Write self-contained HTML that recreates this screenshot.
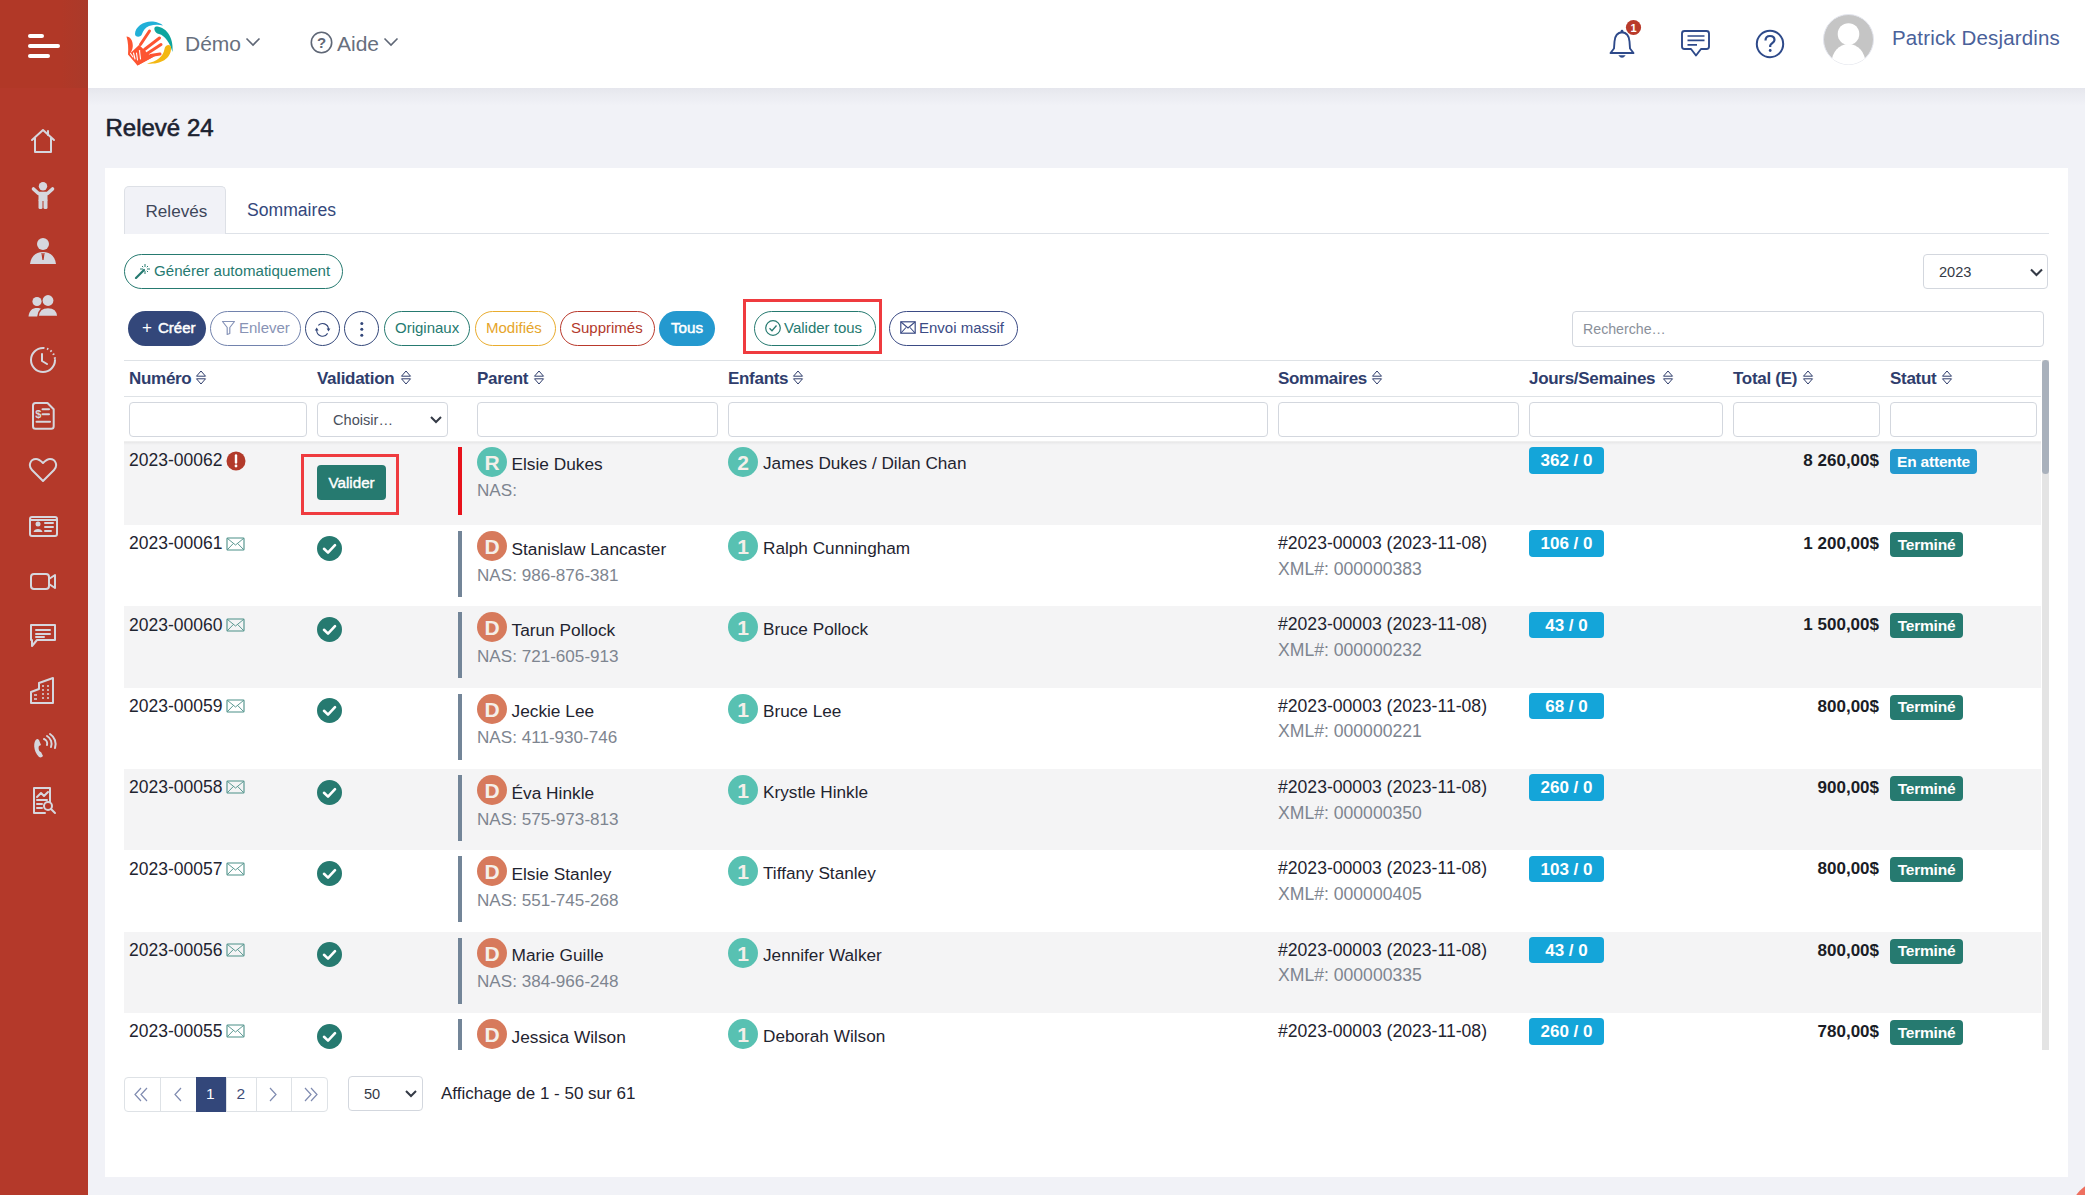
<!DOCTYPE html><html><head><meta charset="utf-8"><style>
html,body{margin:0;padding:0;width:2085px;height:1195px;overflow:hidden;background:#f1f2f7;font-family:"Liberation Sans", sans-serif;}
.t{position:absolute;white-space:nowrap;line-height:1;}
.b{position:absolute;box-sizing:border-box;}
</style></head><body>
<div class="b" style="left:88px;top:88px;width:1997px;height:18px;background:linear-gradient(rgba(30,30,60,0.055),rgba(30,30,60,0.035) 30%,rgba(30,30,60,0))"></div>
<div class="b" style="left:88px;top:0px;width:1997px;height:88px;background:#fff;z-index:2"></div>
<div style="position:absolute;left:0;top:0;width:2085px;height:1195px;z-index:3;pointer-events:none">
<div class="b" style="left:0px;top:0px;width:88px;height:1195px;background:#b4392a"></div>
<div class="b" style="left:0px;top:0px;width:88px;height:88px;background:linear-gradient(to right,#b13827 70%,#aa3a2a)"></div>
<div class="b" style="left:28px;top:34px;width:16px;height:4px;background:#fff;border-radius:2px"></div>
<div class="b" style="left:28px;top:44px;width:32px;height:4px;background:#fff;border-radius:2px"></div>
<div class="b" style="left:28px;top:54px;width:22px;height:4px;background:#fff;border-radius:2px"></div>
<svg class="b" style="left:120px;top:15px" width="60" height="55" viewBox="0 0 60 55">
<path d="M15 19 C15 11 25 5.5 33 6.5 C37 7 41 8.5 43 10.5 C39 9.5 34 9.5 29 11 C25 12.5 23 16 22 19 C21 22.5 15 22.5 15 19 Z" fill="#22b0d8"/>
<path d="M36 11.5 C45 11.5 54 21 52.5 37 C50 28 45 20.5 39 19 C34 18 33 12 36 11.5 Z" fill="#0fa59e"/>
<path d="M51 32 C52 43 41 50 27 48.5 C37 46.5 43.5 41 44.5 34 C45 29.5 50.5 28.5 51 32 Z" fill="#f3b712"/>
<g stroke="#fd5532" stroke-width="3" stroke-linecap="round"><path d="M20.5 29.5 L29.5 16"/><path d="M24.5 34.5 L39.5 23"/><path d="M28 38 L41 29.5"/><path d="M30.5 40.5 L40 39"/></g>
<path d="M6.5 21.5 C10.5 21.5 13 26 12.8 31 C12.7 34 11.5 36.5 10 38.5 L19 30 L31 41.5 L36 40.5 L17.5 50.5 L8 39.5 C8.5 33 8.2 27 6.5 21.5 Z" fill="#fd5532"/>
<path d="M19 30 L26 37.5 L31 41.5 L34 41.5 L17.5 50.5 L16 48 Z" fill="#fd5532"/>
<g stroke="#fff" stroke-width="1.1" stroke-linecap="round"><path d="M10.5 38.5 L13 42"/><path d="M13.5 38 L15 44"/><path d="M16.5 38 L17.5 45"/><path d="M19.5 35.5 L20.5 44"/></g>
</svg>
<div class="t" style="left:185px;top:32.9px;font-size:21px;color:#676f7e;font-weight:normal;">Démo</div>
<svg class="b" style="left:245px;top:37px" width="16" height="10" viewBox="0 0 16 10"><path d="M1.5 1.5 L8 8 L14.5 1.5" stroke="#5f6776" stroke-width="1.6" fill="none"/></svg>
<svg class="b" style="left:310px;top:31px" width="23" height="23" viewBox="0 0 23 23"><circle cx="11.5" cy="11.5" r="10.2" stroke="#5f6776" stroke-width="1.6" fill="none"/><text x="11.5" y="17" font-size="15" text-anchor="middle" fill="#5f6776" font-weight="bold" font-family="Liberation Sans">?</text></svg>
<div class="t" style="left:337px;top:32.9px;font-size:21px;color:#676f7e;font-weight:normal;">Aide</div>
<svg class="b" style="left:383px;top:37px" width="16" height="10" viewBox="0 0 16 10"><path d="M1.5 1.5 L8 8 L14.5 1.5" stroke="#5f6776" stroke-width="1.6" fill="none"/></svg>
<svg class="b" style="left:1606px;top:22px" width="34" height="40" viewBox="0 0 34 40"><path d="M4.5 31 L8 26.5 L8.5 19.5 C9 13.5 12 10.5 16 10.3 C20 10.5 23 13.5 23.5 19.5 L24 26.5 L27.5 31 Z" stroke="#2e4a8a" stroke-width="1.9" fill="none" stroke-linejoin="round"/>
<path d="M12.3 33.3 Q16 38.3 19.7 33.3 Z" fill="#2e4a8a"/><circle cx="16" cy="9.2" r="1.4" fill="#2e4a8a"/></svg>
<svg class="b" style="left:1625px;top:19px" width="17" height="17" viewBox="0 0 17 17"><circle cx="8.5" cy="8.5" r="7.6" fill="#b93a2a"/><text x="8.5" y="12.6" font-size="11" text-anchor="middle" fill="#fff" font-weight="bold" font-family="Liberation Sans">1</text></svg>
<svg class="b" style="left:1680px;top:28px" width="32" height="32" viewBox="0 0 32 32"><path d="M4.5 3 H26.5 Q29 3 29 5.5 V18.5 Q29 21 26.5 21 H21 L16 27.5 L11 21 H4.5 Q2 21 2 18.5 V5.5 Q2 3 4.5 3 Z" stroke="#2e4a8a" stroke-width="1.9" fill="none" stroke-linejoin="round"/>
<path d="M7.5 8 H24.5 M7.5 12.3 H24.5 M7.5 16.8 H17" stroke="#2e4a8a" stroke-width="1.7"/></svg>
<svg class="b" style="left:1754px;top:28px" width="32" height="32" viewBox="0 0 32 32"><circle cx="16" cy="16" r="13.2" stroke="#2e4a8a" stroke-width="2" fill="none"/><path d="M11.5 12.5 C11.5 9.5 13.5 8 16 8 C18.8 8 20.5 9.8 20.5 12 C20.5 14.8 17 15.2 16.2 17.5 L16.2 19" stroke="#2e4a8a" stroke-width="2.2" fill="none"/><circle cx="16.2" cy="22.5" r="1.4" fill="#2e4a8a"/></svg>
<svg class="b" style="left:1823px;top:14px" width="51" height="51" viewBox="0 0 51 51"><defs><clipPath id="av"><circle cx="25.5" cy="25.5" r="25"/></clipPath></defs>
<circle cx="25.5" cy="25.5" r="25" fill="#c5c5c5" stroke="#e4e6ee" stroke-width="1"/>
<g clip-path="url(#av)"><circle cx="25.5" cy="20" r="10.8" fill="#fff"/><ellipse cx="25.5" cy="49" rx="17" ry="19" fill="#fff"/></g></svg>
<div class="t" style="left:1892px;top:28.4px;font-size:20.5px;color:#4a619a;font-weight:normal;letter-spacing:0.15px">Patrick Desjardins</div>
<svg class="b" style="left:28px;top:126px" width="30" height="30" viewBox="0 0 30 30"><path d="M4 14 L15 4 L26 14 M7 12 V26 H23 V12" stroke="#d6d7de" stroke-width="2" fill="none" stroke-linejoin="round" stroke-linecap="round"/><path d="M20 5 V9" stroke="#d6d7de" stroke-width="2" fill="none" stroke-linejoin="round" stroke-linecap="round"/></svg>
<svg class="b" style="left:28px;top:181px" width="30" height="30" viewBox="0 0 30 30"><circle cx="15" cy="5.2" r="4.2" fill="#d6d7de"/><path d="M5.5 8 L10.5 12.5 H19.5 L24.5 8" stroke="#d6d7de" stroke-width="3.6" fill="none" stroke-linecap="round" stroke-linejoin="round"/><rect x="10.5" y="11" width="9" height="9" rx="1" fill="#d6d7de"/><rect x="10.5" y="18" width="4" height="10" rx="1.5" fill="#d6d7de"/><rect x="15.5" y="18" width="4" height="10" rx="1.5" fill="#d6d7de"/></svg>
<svg class="b" style="left:28px;top:236px" width="30" height="30" viewBox="0 0 30 30"><circle cx="15" cy="8" r="6" fill="#d6d7de"/><path d="M2 28 C3 20 8 16 15 16 C22 16 27 20 28 28 Z" fill="#d6d7de"/><path d="M14 17 L15 24 L16 17" stroke="#b4392a" stroke-width="1.2" fill="none"/></svg>
<svg class="b" style="left:28px;top:291px" width="30" height="30" viewBox="0 0 30 30"><circle cx="9" cy="10.5" r="4.6" fill="#d6d7de"/><circle cx="20" cy="9.5" r="5.4" fill="#d6d7de"/><path d="M0.5 25.5 C1 19.5 4.5 17 9 17 C13.5 17 17 19.5 17.5 25.5 Z" fill="#d6d7de"/><path d="M10 25.5 C10.5 19 14.5 16.5 20 16.5 C25.5 16.5 29.5 19 30 25.5 Z" fill="#d6d7de" stroke="#b4392a" stroke-width="1.6"/></svg>
<svg class="b" style="left:28px;top:345px" width="30" height="30" viewBox="0 0 30 30"><path d="M15 3 A12 12 0 1 0 27 15" stroke="#d6d7de" stroke-width="2" fill="none" stroke-linejoin="round" stroke-linecap="round"/><path d="M15 3 A12 12 0 0 1 27 15" stroke="#d6d7de" stroke-width="2" fill="none" stroke-dasharray="1.5 2.5"/><path d="M14 9 V16 L19 19" stroke="#d6d7de" stroke-width="2" fill="none" stroke-linejoin="round" stroke-linecap="round"/></svg>
<svg class="b" style="left:28px;top:400px" width="30" height="30" viewBox="0 0 30 30"><path d="M7.5 3 H19.5 L25.7 9.2 V26.2 Q25.7 28.7 23.2 28.7 H7.5 Q5 28.7 5 26.2 V5.5 Q5 3 7.5 3 Z" stroke="#d6d7de" stroke-width="2" fill="none" stroke-linejoin="round" stroke-linecap="round"/><path d="M14.5 9.3 H21 M14.5 14.3 H21 M8.5 21.8 H22" stroke="#d6d7de" stroke-width="2" fill="none" stroke-linejoin="round" stroke-linecap="round" stroke-width="1.6"/><text x="10.2" y="18" font-size="11" text-anchor="middle" fill="#d6d7de" font-weight="bold" font-family="Liberation Sans">$</text></svg>
<svg class="b" style="left:28px;top:455px" width="30" height="30" viewBox="0 0 30 30"><path d="M15 26 L4 15 C0 11 2 4 8 4 C11 4 13 6 15 8 C17 6 19 4 22 4 C28 4 30 11 26 15 Z" stroke="#d6d7de" stroke-width="2" fill="none" stroke-linejoin="round" stroke-linecap="round"/></svg>
<svg class="b" style="left:28px;top:511px" width="30" height="30" viewBox="0 0 30 30"><rect x="2" y="6" width="27" height="19" rx="2" stroke="#d6d7de" stroke-width="2" fill="none" stroke-linejoin="round" stroke-linecap="round"/><circle cx="10" cy="13" r="2.5" fill="#d6d7de"/><path d="M5.5 21 C6 17 14 17 14.5 21 Z" fill="#d6d7de"/><path d="M17 12 H25 M17 16 H25 M17 20 H23 M2 9 H29" stroke="#d6d7de" stroke-width="2" fill="none" stroke-linejoin="round" stroke-linecap="round" stroke-width="1.6"/></svg>
<svg class="b" style="left:28px;top:566px" width="30" height="30" viewBox="0 0 30 30"><rect x="3" y="8" width="18" height="15" rx="3" stroke="#d6d7de" stroke-width="2" fill="none" stroke-linejoin="round" stroke-linecap="round"/><path d="M21 13 L27 9 V22 L21 18" stroke="#d6d7de" stroke-width="2" fill="none" stroke-linejoin="round" stroke-linecap="round"/></svg>
<svg class="b" style="left:28px;top:620px" width="30" height="30" viewBox="0 0 30 30"><path d="M3 5 H27 V20 H9 L4 26 V20 H3 Z" stroke="#d6d7de" stroke-width="2" fill="none" stroke-linejoin="round" stroke-linecap="round"/><path d="M8 10 H22 M8 14 H22 M8 17 H16" stroke="#d6d7de" stroke-width="2" fill="none" stroke-linejoin="round" stroke-linecap="round" stroke-width="1.6"/></svg>
<svg class="b" style="left:28px;top:676px" width="30" height="30" viewBox="0 0 30 30"><path d="M3 27 V16 L11 13 V7 L25 2 V27 Z" stroke="#d6d7de" stroke-width="2" fill="none" stroke-linejoin="round" stroke-linecap="round"/><path d="M6 19 H9 M6 23 H9 M14 10 H16 M19 10 H21 M14 14 H16 M19 14 H21 M14 18 H16 M19 18 H21 M14 22 H16 M19 22 H21" stroke="#d6d7de" stroke-width="1.6"/></svg>
<svg class="b" style="left:28px;top:731px" width="30" height="30" viewBox="0 0 30 30"><path d="M9 8 C5 10 5 20 11 26 C13 27 14 26 15 25 L13 21 C11 21 10 17 11 15 L13 14 L11 9 C10 8 10 8 9 8 Z" fill="#d6d7de"/><path d="M16 8 A5 5 0 0 1 19 14 M19 5 A9 9 0 0 1 23 16 M22 3 A12 12 0 0 1 27 17" stroke="#d6d7de" stroke-width="2" fill="none" stroke-linejoin="round" stroke-linecap="round" stroke-width="1.8"/></svg>
<svg class="b" style="left:28px;top:786px" width="30" height="30" viewBox="0 0 30 30"><path d="M6 2 H22 V16 M6 2 V27 H17" stroke="#d6d7de" stroke-width="2" fill="none" stroke-linejoin="round" stroke-linecap="round"/><path d="M9 11 L13 7 L16 10 L20 6 M9 14 H19 M9 18 H14 M9 22 H14" stroke="#d6d7de" stroke-width="2" fill="none" stroke-linejoin="round" stroke-linecap="round" stroke-width="1.6"/><circle cx="20" cy="20" r="4" stroke="#d6d7de" stroke-width="2" fill="none" stroke-linejoin="round" stroke-linecap="round"/><path d="M23 23 L27 27" stroke="#d6d7de" stroke-width="2" fill="none" stroke-linejoin="round" stroke-linecap="round" stroke-width="2.2"/></svg>
</div>
<div class="t" style="left:105.5px;top:115.9px;font-size:24px;color:#1c2230;font-weight:normal;-webkit-text-stroke:0.6px #1c2230">Relevé 24</div>
<div class="b" style="left:105px;top:168px;width:1963px;height:1009px;background:#fff"></div>
<div class="b" style="left:124px;top:233px;width:1925px;height:1px;background:#dee2e8"></div>
<div class="b" style="left:124px;top:186px;width:102px;height:48px;background:#f1f2f7;border:1px solid #dde0e6;border-bottom:none;border-radius:5px 5px 0 0"></div>
<div class="t" style="left:145.5px;top:202.5px;font-size:17.1px;color:#3d4659;font-weight:normal;">Relevés</div>
<div class="t" style="left:247px;top:202.1px;font-size:17.6px;color:#34487c;font-weight:normal;">Sommaires</div>
<div class="b" style="left:124px;top:254px;width:219px;height:35px;border:1px solid #267a70;border-radius:18px;background:#fff"></div>
<svg class="b" style="left:134px;top:262px" width="17" height="17" viewBox="0 0 17 17"><path d="M2 16 L10 8" stroke="#267a70" stroke-width="2.2" stroke-linecap="round"/><path d="M11 2 V5 M11 9 V12 M6 7 H9 M13 7 H16 M8 4 L9.2 5.2 M14 4 L12.8 5.2 M14 10 L12.8 8.8" stroke="#267a70" stroke-width="1"/></svg>
<div class="t" style="left:154px;top:262.7px;font-size:15.1px;color:#267a70;font-weight:normal;">Générer automatiquement</div>
<div class="b" style="left:1923px;top:254px;width:125px;height:35px;border:1px solid #d3d7de;border-radius:4px;background:#fff"></div>
<div class="t" style="left:1939px;top:264.6px;font-size:14.6px;color:#343a46;font-weight:normal;">2023</div>
<svg class="b" style="left:2029px;top:267px" width="15" height="11" viewBox="0 0 15 11"><path d="M2 2.5 L7.5 8 L13 2.5" stroke="#343a46" stroke-width="2.1" fill="none"/></svg>
<div class="b" style="left:128px;top:311px;width:78px;height:35px;background:#33477a;border-radius:18px"></div>
<div class="t" style="left:142px;top:318.6px;font-size:17px;color:#fff;font-weight:normal;">+</div>
<div class="t" style="left:158px;top:320.1px;font-size:15px;color:#fff;font-weight:normal;-webkit-text-stroke:0.5px #fff">Créer</div>
<div class="b" style="left:210px;top:311px;width:91px;height:35px;border:1px solid #7283ad;border-radius:18px"></div>
<svg class="b" style="left:221px;top:320px" width="15" height="16" viewBox="0 0 15 16"><path d="M1.5 1.5 H13.5 L8.8 7.5 V13.5 L6.2 14.5 V7.5 Z" stroke="#8794b8" stroke-width="1.2" fill="none" stroke-linejoin="round"/></svg>
<div class="t" style="left:239px;top:320.1px;font-size:15px;color:#8893b5;font-weight:normal;">Enlever</div>
<div class="b" style="left:305px;top:311px;width:35px;height:35px;border:1px solid #33477a;border-radius:50%"></div>
<svg class="b" style="left:313px;top:320px" width="19" height="19" viewBox="0 0 19 19"><path d="M5.3 5.4 A5.9 5.9 0 0 1 15.5 9" stroke="#33477a" stroke-width="1.1" fill="none"/><path d="M13.6 8.6 L17.4 8.6 L15.5 11.4 Z" fill="#33477a"/><path d="M14.6 13.4 A5.9 5.9 0 0 1 3.7 10" stroke="#33477a" stroke-width="1.1" fill="none"/><path d="M1.8 10.4 L5.6 10.4 L3.7 7.6 Z" fill="#33477a"/></svg>
<div class="b" style="left:344px;top:311px;width:35px;height:35px;border:1px solid #33477a;border-radius:50%"></div>
<svg class="b" style="left:358px;top:318px" width="7" height="21" viewBox="0 0 7 21"><circle cx="3.8" cy="5.4" r="1.5" fill="#33477a"/><circle cx="3.8" cy="11.3" r="1.5" fill="#33477a"/><circle cx="3.8" cy="17.2" r="1.5" fill="#33477a"/></svg>
<div class="b" style="left:384px;top:311px;width:86px;height:35px;border:1px solid #267a70;border-radius:18px"></div>
<div class="t" style="left:395px;top:320.1px;font-size:15px;color:#267a70;font-weight:normal;">Originaux</div>
<div class="b" style="left:475px;top:311px;width:81px;height:35px;border:1px solid #e9ac2e;border-radius:18px"></div>
<div class="t" style="left:486px;top:320.1px;font-size:15px;color:#e6a52a;font-weight:normal;">Modifiés</div>
<div class="b" style="left:560px;top:311px;width:95px;height:35px;border:1px solid #b9392c;border-radius:18px"></div>
<div class="t" style="left:571px;top:320.1px;font-size:15px;color:#b3392b;font-weight:normal;">Supprimés</div>
<div class="b" style="left:659px;top:311px;width:56px;height:35px;background:#2499cf;border-radius:18px"></div>
<div class="t" style="left:671px;top:319.9px;font-size:15.2px;color:#fff;font-weight:normal;-webkit-text-stroke:0.5px #fff">Tous</div>
<div class="b" style="left:743px;top:299px;width:139px;height:55px;border:3px solid #ef3b3f"></div>
<div class="b" style="left:754px;top:311px;width:122px;height:35px;border:1px solid #267a70;border-radius:18px"></div>
<svg class="b" style="left:764px;top:319px" width="18" height="18" viewBox="0 0 18 18"><circle cx="9" cy="9" r="7.3" stroke="#267a70" stroke-width="1.2" fill="none"/><path d="M5.5 9.2 L8 11.7 L12.5 6.5" stroke="#267a70" stroke-width="1.3" fill="none"/></svg>
<div class="t" style="left:784px;top:320.1px;font-size:15px;color:#267a70;font-weight:normal;">Valider tous</div>
<div class="b" style="left:889px;top:311px;width:129px;height:35px;border:1px solid #3b4b85;border-radius:18px"></div>
<svg class="b" style="left:900px;top:321px" width="16" height="13" viewBox="0 0 16 13"><rect x="0.8" y="0.8" width="14.4" height="11.4" stroke="#3b4b85" stroke-width="1.2" fill="none"/><path d="M1 1 L8 7 L15 1 M1 12 L6 6.5 M15 12 L10 6.5" stroke="#3b4b85" stroke-width="1.1" fill="none"/></svg>
<div class="t" style="left:919px;top:320.1px;font-size:15px;color:#3b4b85;font-weight:normal;">Envoi massif</div>
<div class="b" style="left:1572px;top:311px;width:472px;height:36px;border:1px solid #d3d7de;border-radius:4px;background:#fff"></div>
<div class="t" style="left:1583px;top:322.0px;font-size:14.2px;color:#8a909a;font-weight:normal;">Recherche…</div>
<div class="b" style="left:124px;top:360px;width:1917px;height:1px;background:#dee2e6"></div>
<div class="t" style="left:129px;top:369.9px;font-size:17px;color:#2f3d6c;font-weight:bold;letter-spacing:-0.3px">Numéro</div>
<svg class="b" style="left:195.0px;top:369.5px" width="12" height="15" viewBox="0 0 12 15"><path d="M1.5 6.2 L6 1 L10.5 6.2 Z M1.5 8.8 L6 14 L10.5 8.8 Z" stroke="#2f3d6c" stroke-width="1" fill="none" stroke-linejoin="miter"/></svg>
<div class="t" style="left:317px;top:369.9px;font-size:17px;color:#2f3d6c;font-weight:bold;letter-spacing:-0.3px">Validation</div>
<svg class="b" style="left:399.5px;top:369.5px" width="12" height="15" viewBox="0 0 12 15"><path d="M1.5 6.2 L6 1 L10.5 6.2 Z M1.5 8.8 L6 14 L10.5 8.8 Z" stroke="#2f3d6c" stroke-width="1" fill="none" stroke-linejoin="miter"/></svg>
<div class="t" style="left:477px;top:369.9px;font-size:17px;color:#2f3d6c;font-weight:bold;letter-spacing:-0.3px">Parent</div>
<svg class="b" style="left:532.5px;top:369.5px" width="12" height="15" viewBox="0 0 12 15"><path d="M1.5 6.2 L6 1 L10.5 6.2 Z M1.5 8.8 L6 14 L10.5 8.8 Z" stroke="#2f3d6c" stroke-width="1" fill="none" stroke-linejoin="miter"/></svg>
<div class="t" style="left:728px;top:369.9px;font-size:17px;color:#2f3d6c;font-weight:bold;letter-spacing:-0.3px">Enfants</div>
<svg class="b" style="left:791.5px;top:369.5px" width="12" height="15" viewBox="0 0 12 15"><path d="M1.5 6.2 L6 1 L10.5 6.2 Z M1.5 8.8 L6 14 L10.5 8.8 Z" stroke="#2f3d6c" stroke-width="1" fill="none" stroke-linejoin="miter"/></svg>
<div class="t" style="left:1278px;top:369.9px;font-size:17px;color:#2f3d6c;font-weight:bold;letter-spacing:-0.3px">Sommaires</div>
<svg class="b" style="left:1370.5px;top:369.5px" width="12" height="15" viewBox="0 0 12 15"><path d="M1.5 6.2 L6 1 L10.5 6.2 Z M1.5 8.8 L6 14 L10.5 8.8 Z" stroke="#2f3d6c" stroke-width="1" fill="none" stroke-linejoin="miter"/></svg>
<div class="t" style="left:1529px;top:369.9px;font-size:17px;color:#2f3d6c;font-weight:bold;letter-spacing:-0.3px">Jours/Semaines</div>
<svg class="b" style="left:1661.5px;top:369.5px" width="12" height="15" viewBox="0 0 12 15"><path d="M1.5 6.2 L6 1 L10.5 6.2 Z M1.5 8.8 L6 14 L10.5 8.8 Z" stroke="#2f3d6c" stroke-width="1" fill="none" stroke-linejoin="miter"/></svg>
<div class="t" style="left:1733px;top:369.9px;font-size:17px;color:#2f3d6c;font-weight:bold;letter-spacing:-0.3px">Total (E)</div>
<svg class="b" style="left:1801.5px;top:369.5px" width="12" height="15" viewBox="0 0 12 15"><path d="M1.5 6.2 L6 1 L10.5 6.2 Z M1.5 8.8 L6 14 L10.5 8.8 Z" stroke="#2f3d6c" stroke-width="1" fill="none" stroke-linejoin="miter"/></svg>
<div class="t" style="left:1890px;top:369.9px;font-size:17px;color:#2f3d6c;font-weight:bold;letter-spacing:-0.3px">Statut</div>
<svg class="b" style="left:1940.5px;top:369.5px" width="12" height="15" viewBox="0 0 12 15"><path d="M1.5 6.2 L6 1 L10.5 6.2 Z M1.5 8.8 L6 14 L10.5 8.8 Z" stroke="#2f3d6c" stroke-width="1" fill="none" stroke-linejoin="miter"/></svg>
<div class="b" style="left:124px;top:396px;width:1917px;height:1px;background:#dee2e6"></div>
<div class="b" style="left:129px;top:402px;width:178px;height:35px;border:1px solid #d3d7de;border-radius:4px;background:#fff"></div>
<div class="b" style="left:317px;top:402px;width:131px;height:35px;border:1px solid #d3d7de;border-radius:4px;background:#fff"></div>
<div class="b" style="left:477px;top:402px;width:241px;height:35px;border:1px solid #d3d7de;border-radius:4px;background:#fff"></div>
<div class="b" style="left:728px;top:402px;width:540px;height:35px;border:1px solid #d3d7de;border-radius:4px;background:#fff"></div>
<div class="b" style="left:1278px;top:402px;width:241px;height:35px;border:1px solid #d3d7de;border-radius:4px;background:#fff"></div>
<div class="b" style="left:1529px;top:402px;width:194px;height:35px;border:1px solid #d3d7de;border-radius:4px;background:#fff"></div>
<div class="b" style="left:1733px;top:402px;width:147px;height:35px;border:1px solid #d3d7de;border-radius:4px;background:#fff"></div>
<div class="b" style="left:1890px;top:402px;width:147px;height:35px;border:1px solid #d3d7de;border-radius:4px;background:#fff"></div>
<div class="t" style="left:333px;top:412.6px;font-size:14.6px;color:#4a505c;font-weight:normal;">Choisir…</div>
<svg class="b" style="left:429px;top:414.5px" width="14" height="10" viewBox="0 0 14 10"><path d="M2 2 L7 7 L12 2" stroke="#343a46" stroke-width="2" fill="none"/></svg>
<div style="position:absolute;left:124px;top:442px;width:1917px;height:608px;overflow:hidden">
<div class="b" style="left:0px;top:0px;width:1917px;height:83.5px;background:#f4f4f5"></div>
<div class="t" style="left:5px;top:10.2px;font-size:17.5px;color:#1f2430;font-weight:normal;">2023-00062</div>
<svg class="b" style="left:102px;top:9px" width="20" height="20" viewBox="0 0 20 20"><circle cx="10" cy="10" r="9.5" fill="#b23a2a"/><path d="M10 4.5 V11.5" stroke="#fff" stroke-width="2.4" stroke-linecap="round"/><circle cx="10" cy="15" r="1.4" fill="#fff"/></svg>
<div class="b" style="left:177px;top:12px;width:98px;height:61px;border:3px solid #ef3b3f"></div>
<div class="b" style="left:193px;top:23px;width:69px;height:35px;background:#267a70;border-radius:4px"></div>
<div class="t" style="left:204.5px;top:32.6px;font-size:15.2px;color:#fff;font-weight:normal;-webkit-text-stroke:0.4px #fff">Valider</div>
<div class="b" style="left:334px;top:4.5px;width:4px;height:68px;background:#e8121b"></div>
<svg class="b" style="left:353px;top:4.5px" width="30" height="30" viewBox="0 0 30 30"><circle cx="15" cy="15" r="15" fill="#58c1b2"/><text x="15" y="22.6" font-size="21" text-anchor="middle" fill="#f4efe9" font-weight="bold" font-family="Liberation Sans">R</text></svg>
<div class="t" style="left:387.5px;top:14.3px;font-size:17.3px;color:#1f2430;font-weight:normal;">Elsie Dukes</div>
<div class="t" style="left:353px;top:40.0px;font-size:17.1px;color:#7e8590;font-weight:normal;">NAS:</div>
<svg class="b" style="left:604px;top:4.5px" width="30" height="30" viewBox="0 0 30 30"><circle cx="15" cy="15" r="15" fill="#58c1b2"/><text x="15" y="22.6" font-size="21" text-anchor="middle" fill="#f4efe9" font-weight="bold" font-family="Liberation Sans">2</text></svg>
<div class="t" style="left:639px;top:13.4px;font-size:17.2px;color:#1f2430;font-weight:normal;">James Dukes / Dilan Chan</div>
<div class="b" style="left:1405px;top:5px;width:75px;height:26.5px;background:#14a5d9;border-radius:4px"></div>
<div class="t" style="left:1405px;width:75px;text-align:center;top:10.2px;font-size:17px;color:#fff;font-weight:bold">362 / 0</div>
<div class="t" style="left:1455px;width:300px;text-align:right;top:10.1px;font-size:17px;color:#1a1d26;font-weight:bold;">8 260,00$</div>
<div class="b" style="left:1766px;top:7px;width:87px;height:25px;background:#2499cf;border-radius:4px"></div>
<div class="t" style="left:1766px;width:87px;text-align:center;top:11.6px;font-size:15.5px;color:#fff;font-weight:bold;letter-spacing:-0.2px">En attente</div>
<div class="b" style="left:0px;top:83.0px;width:1917px;height:81.833px;background:#ffffff"></div>
<div class="t" style="left:5px;top:93.2px;font-size:17.5px;color:#1f2430;font-weight:normal;">2023-00061</div>
<svg class="b" style="left:102px;top:94.5px" width="19" height="14" viewBox="0 0 19 14"><rect x="1" y="1" width="17" height="12" rx="0.8" stroke="#4b8f87" stroke-width="1.1" fill="none"/><path d="M1.5 1.5 L9.5 8 L17.5 1.5 M1.5 12.5 L7.3 6.5 M17.5 12.5 L11.7 6.5" stroke="#4b8f87" stroke-width="0.9" fill="none"/></svg>
<svg class="b" style="left:193px;top:93.70000000000005px" width="25" height="25" viewBox="0 0 25 25"><circle cx="12.5" cy="12.5" r="12.5" fill="#267a70"/><path d="M7 12.8 L11 16.6 L18 9.2" stroke="#fff" stroke-width="2.6" fill="none" stroke-linecap="round" stroke-linejoin="round"/></svg>
<div class="b" style="left:334px;top:89.0px;width:4px;height:66px;background:#738598"></div>
<svg class="b" style="left:353px;top:89.0px" width="30" height="30" viewBox="0 0 30 30"><circle cx="15" cy="15" r="15" fill="#d77a5c"/><text x="15" y="22.6" font-size="21" text-anchor="middle" fill="#f4efe9" font-weight="bold" font-family="Liberation Sans">D</text></svg>
<div class="t" style="left:387.5px;top:98.8px;font-size:17.3px;color:#1f2430;font-weight:normal;">Stanislaw Lancaster</div>
<div class="t" style="left:353px;top:124.5px;font-size:17.1px;color:#7e8590;font-weight:normal;">NAS: 986-876-381</div>
<svg class="b" style="left:604px;top:89.0px" width="30" height="30" viewBox="0 0 30 30"><circle cx="15" cy="15" r="15" fill="#58c1b2"/><text x="15" y="22.6" font-size="21" text-anchor="middle" fill="#f4efe9" font-weight="bold" font-family="Liberation Sans">1</text></svg>
<div class="t" style="left:639px;top:97.9px;font-size:17.2px;color:#1f2430;font-weight:normal;">Ralph Cunningham</div>
<div class="t" style="left:1154px;top:92.8px;font-size:17.6px;color:#1f2430;font-weight:normal;">#2023-00003 (2023-11-08)</div>
<div class="t" style="left:1154px;top:118.5px;font-size:17.6px;color:#7e8590;font-weight:normal;">XML#: 000000383</div>
<div class="b" style="left:1405px;top:88.20000000000005px;width:75px;height:26.5px;background:#14a5d9;border-radius:4px"></div>
<div class="t" style="left:1405px;width:75px;text-align:center;top:93.4px;font-size:17px;color:#fff;font-weight:bold">106 / 0</div>
<div class="t" style="left:1455px;width:300px;text-align:right;top:93.1px;font-size:17px;color:#1a1d26;font-weight:bold;">1 200,00$</div>
<div class="b" style="left:1766px;top:90.0px;width:73px;height:25px;background:#267a70;border-radius:4px"></div>
<div class="t" style="left:1766px;width:73px;text-align:center;top:94.6px;font-size:15.5px;color:#fff;font-weight:bold;letter-spacing:-0.2px">Terminé</div>
<div class="b" style="left:0px;top:164.33299999999997px;width:1917px;height:81.833px;background:#f4f4f5"></div>
<div class="t" style="left:5px;top:174.5px;font-size:17.5px;color:#1f2430;font-weight:normal;">2023-00060</div>
<svg class="b" style="left:102px;top:175.83299999999997px" width="19" height="14" viewBox="0 0 19 14"><rect x="1" y="1" width="17" height="12" rx="0.8" stroke="#4b8f87" stroke-width="1.1" fill="none"/><path d="M1.5 1.5 L9.5 8 L17.5 1.5 M1.5 12.5 L7.3 6.5 M17.5 12.5 L11.7 6.5" stroke="#4b8f87" stroke-width="0.9" fill="none"/></svg>
<svg class="b" style="left:193px;top:175.03300000000002px" width="25" height="25" viewBox="0 0 25 25"><circle cx="12.5" cy="12.5" r="12.5" fill="#267a70"/><path d="M7 12.8 L11 16.6 L18 9.2" stroke="#fff" stroke-width="2.6" fill="none" stroke-linecap="round" stroke-linejoin="round"/></svg>
<div class="b" style="left:334px;top:170.33299999999997px;width:4px;height:66px;background:#738598"></div>
<svg class="b" style="left:353px;top:170.33299999999997px" width="30" height="30" viewBox="0 0 30 30"><circle cx="15" cy="15" r="15" fill="#d77a5c"/><text x="15" y="22.6" font-size="21" text-anchor="middle" fill="#f4efe9" font-weight="bold" font-family="Liberation Sans">D</text></svg>
<div class="t" style="left:387.5px;top:180.1px;font-size:17.3px;color:#1f2430;font-weight:normal;">Tarun Pollock</div>
<div class="t" style="left:353px;top:205.9px;font-size:17.1px;color:#7e8590;font-weight:normal;">NAS: 721-605-913</div>
<svg class="b" style="left:604px;top:170.33299999999997px" width="30" height="30" viewBox="0 0 30 30"><circle cx="15" cy="15" r="15" fill="#58c1b2"/><text x="15" y="22.6" font-size="21" text-anchor="middle" fill="#f4efe9" font-weight="bold" font-family="Liberation Sans">1</text></svg>
<div class="t" style="left:639px;top:179.3px;font-size:17.2px;color:#1f2430;font-weight:normal;">Bruce Pollock</div>
<div class="t" style="left:1154px;top:174.1px;font-size:17.6px;color:#1f2430;font-weight:normal;">#2023-00003 (2023-11-08)</div>
<div class="t" style="left:1154px;top:199.8px;font-size:17.6px;color:#7e8590;font-weight:normal;">XML#: 000000232</div>
<div class="b" style="left:1405px;top:169.53300000000002px;width:75px;height:26.5px;background:#14a5d9;border-radius:4px"></div>
<div class="t" style="left:1405px;width:75px;text-align:center;top:174.7px;font-size:17px;color:#fff;font-weight:bold">43 / 0</div>
<div class="t" style="left:1455px;width:300px;text-align:right;top:174.4px;font-size:17px;color:#1a1d26;font-weight:bold;">1 500,00$</div>
<div class="b" style="left:1766px;top:171.33299999999997px;width:73px;height:25px;background:#267a70;border-radius:4px"></div>
<div class="t" style="left:1766px;width:73px;text-align:center;top:175.9px;font-size:15.5px;color:#fff;font-weight:bold;letter-spacing:-0.2px">Terminé</div>
<div class="b" style="left:0px;top:245.66599999999994px;width:1917px;height:81.833px;background:#ffffff"></div>
<div class="t" style="left:5px;top:255.9px;font-size:17.5px;color:#1f2430;font-weight:normal;">2023-00059</div>
<svg class="b" style="left:102px;top:257.16599999999994px" width="19" height="14" viewBox="0 0 19 14"><rect x="1" y="1" width="17" height="12" rx="0.8" stroke="#4b8f87" stroke-width="1.1" fill="none"/><path d="M1.5 1.5 L9.5 8 L17.5 1.5 M1.5 12.5 L7.3 6.5 M17.5 12.5 L11.7 6.5" stroke="#4b8f87" stroke-width="0.9" fill="none"/></svg>
<svg class="b" style="left:193px;top:256.366px" width="25" height="25" viewBox="0 0 25 25"><circle cx="12.5" cy="12.5" r="12.5" fill="#267a70"/><path d="M7 12.8 L11 16.6 L18 9.2" stroke="#fff" stroke-width="2.6" fill="none" stroke-linecap="round" stroke-linejoin="round"/></svg>
<div class="b" style="left:334px;top:251.66599999999994px;width:4px;height:66px;background:#738598"></div>
<svg class="b" style="left:353px;top:251.66599999999994px" width="30" height="30" viewBox="0 0 30 30"><circle cx="15" cy="15" r="15" fill="#d77a5c"/><text x="15" y="22.6" font-size="21" text-anchor="middle" fill="#f4efe9" font-weight="bold" font-family="Liberation Sans">D</text></svg>
<div class="t" style="left:387.5px;top:261.4px;font-size:17.3px;color:#1f2430;font-weight:normal;">Jeckie Lee</div>
<div class="t" style="left:353px;top:287.2px;font-size:17.1px;color:#7e8590;font-weight:normal;">NAS: 411-930-746</div>
<svg class="b" style="left:604px;top:251.66599999999994px" width="30" height="30" viewBox="0 0 30 30"><circle cx="15" cy="15" r="15" fill="#58c1b2"/><text x="15" y="22.6" font-size="21" text-anchor="middle" fill="#f4efe9" font-weight="bold" font-family="Liberation Sans">1</text></svg>
<div class="t" style="left:639px;top:260.6px;font-size:17.2px;color:#1f2430;font-weight:normal;">Bruce Lee</div>
<div class="t" style="left:1154px;top:255.5px;font-size:17.6px;color:#1f2430;font-weight:normal;">#2023-00003 (2023-11-08)</div>
<div class="t" style="left:1154px;top:281.2px;font-size:17.6px;color:#7e8590;font-weight:normal;">XML#: 000000221</div>
<div class="b" style="left:1405px;top:250.86599999999999px;width:75px;height:26.5px;background:#14a5d9;border-radius:4px"></div>
<div class="t" style="left:1405px;width:75px;text-align:center;top:256.1px;font-size:17px;color:#fff;font-weight:bold">68 / 0</div>
<div class="t" style="left:1455px;width:300px;text-align:right;top:255.8px;font-size:17px;color:#1a1d26;font-weight:bold;">800,00$</div>
<div class="b" style="left:1766px;top:252.66599999999994px;width:73px;height:25px;background:#267a70;border-radius:4px"></div>
<div class="t" style="left:1766px;width:73px;text-align:center;top:257.3px;font-size:15.5px;color:#fff;font-weight:bold;letter-spacing:-0.2px">Terminé</div>
<div class="b" style="left:0px;top:326.999px;width:1917px;height:81.833px;background:#f4f4f5"></div>
<div class="t" style="left:5px;top:337.2px;font-size:17.5px;color:#1f2430;font-weight:normal;">2023-00058</div>
<svg class="b" style="left:102px;top:338.499px" width="19" height="14" viewBox="0 0 19 14"><rect x="1" y="1" width="17" height="12" rx="0.8" stroke="#4b8f87" stroke-width="1.1" fill="none"/><path d="M1.5 1.5 L9.5 8 L17.5 1.5 M1.5 12.5 L7.3 6.5 M17.5 12.5 L11.7 6.5" stroke="#4b8f87" stroke-width="0.9" fill="none"/></svg>
<svg class="b" style="left:193px;top:337.69900000000007px" width="25" height="25" viewBox="0 0 25 25"><circle cx="12.5" cy="12.5" r="12.5" fill="#267a70"/><path d="M7 12.8 L11 16.6 L18 9.2" stroke="#fff" stroke-width="2.6" fill="none" stroke-linecap="round" stroke-linejoin="round"/></svg>
<div class="b" style="left:334px;top:332.999px;width:4px;height:66px;background:#738598"></div>
<svg class="b" style="left:353px;top:332.999px" width="30" height="30" viewBox="0 0 30 30"><circle cx="15" cy="15" r="15" fill="#d77a5c"/><text x="15" y="22.6" font-size="21" text-anchor="middle" fill="#f4efe9" font-weight="bold" font-family="Liberation Sans">D</text></svg>
<div class="t" style="left:387.5px;top:342.8px;font-size:17.3px;color:#1f2430;font-weight:normal;">Éva Hinkle</div>
<div class="t" style="left:353px;top:368.5px;font-size:17.1px;color:#7e8590;font-weight:normal;">NAS: 575-973-813</div>
<svg class="b" style="left:604px;top:332.999px" width="30" height="30" viewBox="0 0 30 30"><circle cx="15" cy="15" r="15" fill="#58c1b2"/><text x="15" y="22.6" font-size="21" text-anchor="middle" fill="#f4efe9" font-weight="bold" font-family="Liberation Sans">1</text></svg>
<div class="t" style="left:639px;top:341.9px;font-size:17.2px;color:#1f2430;font-weight:normal;">Krystle Hinkle</div>
<div class="t" style="left:1154px;top:336.8px;font-size:17.6px;color:#1f2430;font-weight:normal;">#2023-00003 (2023-11-08)</div>
<div class="t" style="left:1154px;top:362.5px;font-size:17.6px;color:#7e8590;font-weight:normal;">XML#: 000000350</div>
<div class="b" style="left:1405px;top:332.19900000000007px;width:75px;height:26.5px;background:#14a5d9;border-radius:4px"></div>
<div class="t" style="left:1405px;width:75px;text-align:center;top:337.4px;font-size:17px;color:#fff;font-weight:bold">260 / 0</div>
<div class="t" style="left:1455px;width:300px;text-align:right;top:337.1px;font-size:17px;color:#1a1d26;font-weight:bold;">900,00$</div>
<div class="b" style="left:1766px;top:333.999px;width:73px;height:25px;background:#267a70;border-radius:4px"></div>
<div class="t" style="left:1766px;width:73px;text-align:center;top:338.6px;font-size:15.5px;color:#fff;font-weight:bold;letter-spacing:-0.2px">Terminé</div>
<div class="b" style="left:0px;top:408.332px;width:1917px;height:81.833px;background:#ffffff"></div>
<div class="t" style="left:5px;top:418.5px;font-size:17.5px;color:#1f2430;font-weight:normal;">2023-00057</div>
<svg class="b" style="left:102px;top:419.832px" width="19" height="14" viewBox="0 0 19 14"><rect x="1" y="1" width="17" height="12" rx="0.8" stroke="#4b8f87" stroke-width="1.1" fill="none"/><path d="M1.5 1.5 L9.5 8 L17.5 1.5 M1.5 12.5 L7.3 6.5 M17.5 12.5 L11.7 6.5" stroke="#4b8f87" stroke-width="0.9" fill="none"/></svg>
<svg class="b" style="left:193px;top:419.03200000000004px" width="25" height="25" viewBox="0 0 25 25"><circle cx="12.5" cy="12.5" r="12.5" fill="#267a70"/><path d="M7 12.8 L11 16.6 L18 9.2" stroke="#fff" stroke-width="2.6" fill="none" stroke-linecap="round" stroke-linejoin="round"/></svg>
<div class="b" style="left:334px;top:414.332px;width:4px;height:66px;background:#738598"></div>
<svg class="b" style="left:353px;top:414.332px" width="30" height="30" viewBox="0 0 30 30"><circle cx="15" cy="15" r="15" fill="#d77a5c"/><text x="15" y="22.6" font-size="21" text-anchor="middle" fill="#f4efe9" font-weight="bold" font-family="Liberation Sans">D</text></svg>
<div class="t" style="left:387.5px;top:424.1px;font-size:17.3px;color:#1f2430;font-weight:normal;">Elsie Stanley</div>
<div class="t" style="left:353px;top:449.9px;font-size:17.1px;color:#7e8590;font-weight:normal;">NAS: 551-745-268</div>
<svg class="b" style="left:604px;top:414.332px" width="30" height="30" viewBox="0 0 30 30"><circle cx="15" cy="15" r="15" fill="#58c1b2"/><text x="15" y="22.6" font-size="21" text-anchor="middle" fill="#f4efe9" font-weight="bold" font-family="Liberation Sans">1</text></svg>
<div class="t" style="left:639px;top:423.3px;font-size:17.2px;color:#1f2430;font-weight:normal;">Tiffany Stanley</div>
<div class="t" style="left:1154px;top:418.1px;font-size:17.6px;color:#1f2430;font-weight:normal;">#2023-00003 (2023-11-08)</div>
<div class="t" style="left:1154px;top:443.8px;font-size:17.6px;color:#7e8590;font-weight:normal;">XML#: 000000405</div>
<div class="b" style="left:1405px;top:413.53200000000004px;width:75px;height:26.5px;background:#14a5d9;border-radius:4px"></div>
<div class="t" style="left:1405px;width:75px;text-align:center;top:418.7px;font-size:17px;color:#fff;font-weight:bold">103 / 0</div>
<div class="t" style="left:1455px;width:300px;text-align:right;top:418.4px;font-size:17px;color:#1a1d26;font-weight:bold;">800,00$</div>
<div class="b" style="left:1766px;top:415.332px;width:73px;height:25px;background:#267a70;border-radius:4px"></div>
<div class="t" style="left:1766px;width:73px;text-align:center;top:419.9px;font-size:15.5px;color:#fff;font-weight:bold;letter-spacing:-0.2px">Terminé</div>
<div class="b" style="left:0px;top:489.66499999999996px;width:1917px;height:81.833px;background:#f4f4f5"></div>
<div class="t" style="left:5px;top:499.9px;font-size:17.5px;color:#1f2430;font-weight:normal;">2023-00056</div>
<svg class="b" style="left:102px;top:501.16499999999996px" width="19" height="14" viewBox="0 0 19 14"><rect x="1" y="1" width="17" height="12" rx="0.8" stroke="#4b8f87" stroke-width="1.1" fill="none"/><path d="M1.5 1.5 L9.5 8 L17.5 1.5 M1.5 12.5 L7.3 6.5 M17.5 12.5 L11.7 6.5" stroke="#4b8f87" stroke-width="0.9" fill="none"/></svg>
<svg class="b" style="left:193px;top:500.365px" width="25" height="25" viewBox="0 0 25 25"><circle cx="12.5" cy="12.5" r="12.5" fill="#267a70"/><path d="M7 12.8 L11 16.6 L18 9.2" stroke="#fff" stroke-width="2.6" fill="none" stroke-linecap="round" stroke-linejoin="round"/></svg>
<div class="b" style="left:334px;top:495.66499999999996px;width:4px;height:66px;background:#738598"></div>
<svg class="b" style="left:353px;top:495.66499999999996px" width="30" height="30" viewBox="0 0 30 30"><circle cx="15" cy="15" r="15" fill="#d77a5c"/><text x="15" y="22.6" font-size="21" text-anchor="middle" fill="#f4efe9" font-weight="bold" font-family="Liberation Sans">D</text></svg>
<div class="t" style="left:387.5px;top:505.4px;font-size:17.3px;color:#1f2430;font-weight:normal;">Marie Guille</div>
<div class="t" style="left:353px;top:531.2px;font-size:17.1px;color:#7e8590;font-weight:normal;">NAS: 384-966-248</div>
<svg class="b" style="left:604px;top:495.66499999999996px" width="30" height="30" viewBox="0 0 30 30"><circle cx="15" cy="15" r="15" fill="#58c1b2"/><text x="15" y="22.6" font-size="21" text-anchor="middle" fill="#f4efe9" font-weight="bold" font-family="Liberation Sans">1</text></svg>
<div class="t" style="left:639px;top:504.6px;font-size:17.2px;color:#1f2430;font-weight:normal;">Jennifer Walker</div>
<div class="t" style="left:1154px;top:499.5px;font-size:17.6px;color:#1f2430;font-weight:normal;">#2023-00003 (2023-11-08)</div>
<div class="t" style="left:1154px;top:525.2px;font-size:17.6px;color:#7e8590;font-weight:normal;">XML#: 000000335</div>
<div class="b" style="left:1405px;top:494.865px;width:75px;height:26.5px;background:#14a5d9;border-radius:4px"></div>
<div class="t" style="left:1405px;width:75px;text-align:center;top:500.1px;font-size:17px;color:#fff;font-weight:bold">43 / 0</div>
<div class="t" style="left:1455px;width:300px;text-align:right;top:499.8px;font-size:17px;color:#1a1d26;font-weight:bold;">800,00$</div>
<div class="b" style="left:1766px;top:496.66499999999996px;width:73px;height:25px;background:#267a70;border-radius:4px"></div>
<div class="t" style="left:1766px;width:73px;text-align:center;top:501.3px;font-size:15.5px;color:#fff;font-weight:bold;letter-spacing:-0.2px">Terminé</div>
<div class="b" style="left:0px;top:570.998px;width:1917px;height:81.833px;background:#ffffff"></div>
<div class="t" style="left:5px;top:581.2px;font-size:17.5px;color:#1f2430;font-weight:normal;">2023-00055</div>
<svg class="b" style="left:102px;top:582.498px" width="19" height="14" viewBox="0 0 19 14"><rect x="1" y="1" width="17" height="12" rx="0.8" stroke="#4b8f87" stroke-width="1.1" fill="none"/><path d="M1.5 1.5 L9.5 8 L17.5 1.5 M1.5 12.5 L7.3 6.5 M17.5 12.5 L11.7 6.5" stroke="#4b8f87" stroke-width="0.9" fill="none"/></svg>
<svg class="b" style="left:193px;top:581.6980000000001px" width="25" height="25" viewBox="0 0 25 25"><circle cx="12.5" cy="12.5" r="12.5" fill="#267a70"/><path d="M7 12.8 L11 16.6 L18 9.2" stroke="#fff" stroke-width="2.6" fill="none" stroke-linecap="round" stroke-linejoin="round"/></svg>
<div class="b" style="left:334px;top:576.998px;width:4px;height:66px;background:#738598"></div>
<svg class="b" style="left:353px;top:576.998px" width="30" height="30" viewBox="0 0 30 30"><circle cx="15" cy="15" r="15" fill="#d77a5c"/><text x="15" y="22.6" font-size="21" text-anchor="middle" fill="#f4efe9" font-weight="bold" font-family="Liberation Sans">D</text></svg>
<div class="t" style="left:387.5px;top:586.8px;font-size:17.3px;color:#1f2430;font-weight:normal;">Jessica Wilson</div>
<div class="t" style="left:353px;top:612.5px;font-size:17.1px;color:#7e8590;font-weight:normal;">NAS: 000-000-000</div>
<svg class="b" style="left:604px;top:576.998px" width="30" height="30" viewBox="0 0 30 30"><circle cx="15" cy="15" r="15" fill="#58c1b2"/><text x="15" y="22.6" font-size="21" text-anchor="middle" fill="#f4efe9" font-weight="bold" font-family="Liberation Sans">1</text></svg>
<div class="t" style="left:639px;top:585.9px;font-size:17.2px;color:#1f2430;font-weight:normal;">Deborah Wilson</div>
<div class="t" style="left:1154px;top:580.8px;font-size:17.6px;color:#1f2430;font-weight:normal;">#2023-00003 (2023-11-08)</div>
<div class="t" style="left:1154px;top:606.5px;font-size:17.6px;color:#7e8590;font-weight:normal;">XML#: 000000000</div>
<div class="b" style="left:1405px;top:576.1980000000001px;width:75px;height:26.5px;background:#14a5d9;border-radius:4px"></div>
<div class="t" style="left:1405px;width:75px;text-align:center;top:581.4px;font-size:17px;color:#fff;font-weight:bold">260 / 0</div>
<div class="t" style="left:1455px;width:300px;text-align:right;top:581.1px;font-size:17px;color:#1a1d26;font-weight:bold;">780,00$</div>
<div class="b" style="left:1766px;top:577.998px;width:73px;height:25px;background:#267a70;border-radius:4px"></div>
<div class="t" style="left:1766px;width:73px;text-align:center;top:582.6px;font-size:15.5px;color:#fff;font-weight:bold;letter-spacing:-0.2px">Terminé</div>
</div>
<div class="b" style="left:124px;top:441px;width:1917px;height:4px;background:linear-gradient(rgba(0,0,0,0.07),rgba(0,0,0,0))"></div>
<div class="b" style="left:2042px;top:360px;width:7px;height:690px;background:#e4e4e4"></div>
<div class="b" style="left:2042px;top:360px;width:7px;height:114px;background:#a9b1bc;border-radius:4px"></div>
<div class="b" style="left:124px;top:1077px;width:204px;height:35px;border:1px solid #dee2e6;border-radius:4px;background:#fff"></div>
<div class="b" style="left:160px;top:1077px;width:1px;height:35px;background:#dee2e6"></div>
<div class="b" style="left:196px;top:1077px;width:30px;height:35px;background:#33477a"></div>
<div class="t" style="left:206.0px;top:1086.4px;font-size:15.5px;color:#fff;font-weight:normal;">1</div>
<div class="b" style="left:226px;top:1077px;width:1px;height:35px;background:#dee2e6"></div>
<div class="t" style="left:236.5px;top:1086.4px;font-size:15.5px;color:#3e4c78;font-weight:normal;">2</div>
<div class="b" style="left:256px;top:1077px;width:1px;height:35px;background:#dee2e6"></div>
<div class="b" style="left:291px;top:1077px;width:1px;height:35px;background:#dee2e6"></div>
<svg class="b" style="left:132px;top:1086px" width="20" height="17" viewBox="0 0 20 17"><path d="M9 2 L3 8.5 L9 15 M15 2 L9 8.5 L15 15" stroke="#7f8bb0" stroke-width="1.2" fill="none"/></svg>
<svg class="b" style="left:171px;top:1086px" width="14" height="17" viewBox="0 0 14 17"><path d="M10 2 L4 8.5 L10 15" stroke="#7f8bb0" stroke-width="1.2" fill="none"/></svg>
<svg class="b" style="left:266px;top:1086px" width="14" height="17" viewBox="0 0 14 17"><path d="M4 2 L10 8.5 L4 15" stroke="#7f8bb0" stroke-width="1.2" fill="none"/></svg>
<svg class="b" style="left:300px;top:1086px" width="20" height="17" viewBox="0 0 20 17"><path d="M5 2 L11 8.5 L5 15 M11 2 L17 8.5 L11 15" stroke="#7f8bb0" stroke-width="1.2" fill="none"/></svg>
<div class="b" style="left:348px;top:1076px;width:75px;height:35px;border:1px solid #d3d7de;border-radius:4px;background:#fff"></div>
<div class="t" style="left:364px;top:1087.1px;font-size:14.6px;color:#343a46;font-weight:normal;">50</div>
<svg class="b" style="left:404px;top:1089px" width="14" height="10" viewBox="0 0 14 10"><path d="M2 2 L7 7 L12 2" stroke="#343a46" stroke-width="2" fill="none"/></svg>
<div class="t" style="left:441px;top:1084.9px;font-size:17px;color:#1f2430;font-weight:normal;">Affichage de 1 - 50 sur 61</div>
<svg class="b" style="left:2065px;top:1175px" width="20" height="20" viewBox="0 0 20 20"><circle cx="40" cy="40" r="35" fill="#ee6f5f"/></svg>
</body></html>
